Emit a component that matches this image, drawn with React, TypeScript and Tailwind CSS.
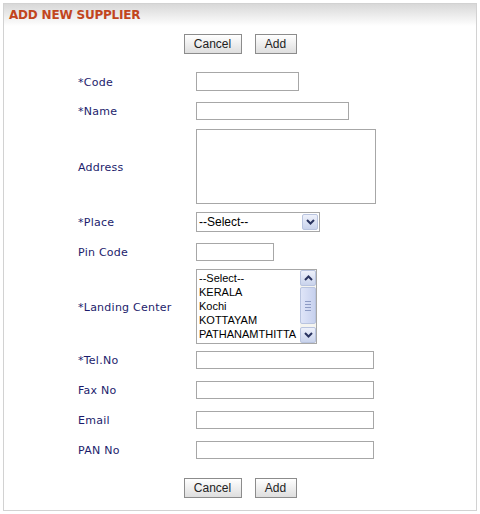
const labelCls =
	"w-[118px] shrink-0 pl-[74px] pt-[2px] box-content text-[11px] leading-[14px] tracking-[0.25px] text-[#1c1c6c] [font-family:'DejaVu_Sans',Verdana,sans-serif]";
const inputCls = "block h-full w-full border border-[#a7a7a7] bg-white";

function Buttons({ className = "" }: { className?: string }) {
	return (
		<div className={`flex justify-center gap-[13px] ${className}`}>
			<button className="h-[20px] w-[58px] border border-[#8c8c8c] bg-gradient-to-b from-white to-[#dedede] text-[12px] leading-[18px] text-[#222] [font-family:'Liberation_Sans',Arial,sans-serif]">
				Cancel
			</button>
			<button className="h-[20px] w-[42px] border border-[#8c8c8c] bg-gradient-to-b from-white to-[#dedede] text-[12px] leading-[18px] text-[#222] [font-family:'Liberation_Sans',Arial,sans-serif]">
				Add
			</button>
		</div>
	);
}

function Row({
	label,
	className,
	box,
	children,
}: {
	label: string;
	className: string;
	box: string;
	children?: React.ReactNode;
}) {
	return (
		<div className={`flex items-center ${className}`}>
			<span className={labelCls}>{label}</span>
			<div className={box}>{children ?? <div className={inputCls} />}</div>
		</div>
	);
}

function Chevron({ up = false }: { up?: boolean }) {
	return (
		<svg width="9" height="6" viewBox="0 0 9 6" className={up ? "rotate-180" : ""}>
			<path d="M1 1 L4.5 4.5 L8 1" fill="none" stroke="#2a3460" strokeWidth="2" />
		</svg>
	);
}

function ArrowBtn({ up = false }: { up?: boolean }) {
	return (
		<div className="flex h-[16px] w-[16px] items-center justify-center rounded-[2px] border border-[#b9c4df] bg-gradient-to-b from-[#eef1fb] to-[#c9d3ec]">
			<Chevron up={up} />
		</div>
	);
}

export default function App() {
	const places = ["--Select--", "KERALA", "Kochi", "KOTTAYAM", "PATHANAMTHITTA"];
	return (
		<div className="pl-[3px] pt-[3px]">
			<div className="h-[508px] w-[474px] border border-[#d2d2d2] bg-white">
				<div className="h-[22px] bg-gradient-to-b from-[#d8d8d8] to-white pl-[5px] pt-[4px]">
					<h1 className="text-[12px] font-bold leading-[14px] tracking-[-0.2px] text-[#c2451d] [font-family:'DejaVu_Sans',Verdana,sans-serif]">
						ADD NEW SUPPLIER
					</h1>
				</div>

				<Buttons className="mt-[8px]" />

				<Row label="*Code" className="mt-[18px]" box="h-[19px] w-[103px]" />
				<Row label="*Name" className="mt-[11px]" box="h-[18px] w-[153px]" />
				<Row label="Address" className="mt-[9px]" box="h-[75px] w-[180px]" />
				<Row label="*Place" className="mt-[8px]" box="h-[20px] w-[124px]">
					<div className="flex h-full w-full items-center border border-[#a7a7a7] bg-white pl-[2px] pr-[1px]">
						<span className="flex-1 text-[12px] leading-[14px] text-black [font-family:'Liberation_Sans',Arial,sans-serif]">
							--Select--
						</span>
						<div className="flex h-[16px] w-[16px] items-center justify-center rounded-[2px] border border-[#b9c4df] bg-gradient-to-b from-[#eef1fb] to-[#c9d3ec]">
							<Chevron />
						</div>
					</div>
				</Row>
				<Row label="Pin Code" className="mt-[11px]" box="h-[18px] w-[78px]" />
				<Row label="*Landing Center" className="mt-[8px]" box="h-[75px] w-[121px]">
					<div className="flex h-full w-full border border-[#a7a7a7] bg-white">
						<div className="flex-1 pl-[2px] pt-[1px] text-[11px] leading-[14px] text-black [font-family:'Liberation_Sans',Arial,sans-serif]">
							{places.map((p) => (
								<div key={p}>{p}</div>
							))}
						</div>
						<div className="flex w-[16px] flex-col bg-[#f4f4f0]">
							<ArrowBtn up />
							<div className="mt-[1px] flex h-[37px] w-[16px] flex-col items-center justify-center gap-[2px] rounded-[2px] border border-[#b9c4df] bg-gradient-to-r from-[#dfe5f8] to-[#c7d1ee]">
								<div className="h-px w-[6px] bg-[#8d9bc4]" />
								<div className="h-px w-[6px] bg-[#8d9bc4]" />
								<div className="h-px w-[6px] bg-[#8d9bc4]" />
								<div className="h-px w-[6px] bg-[#8d9bc4]" />
							</div>
							<div className="flex-1" />
							<ArrowBtn />
						</div>
					</div>
				</Row>
				<Row label="*Tel.No" className="mt-[7px]" box="h-[18px] w-[178px]" />
				<Row label="Fax No" className="mt-[12px]" box="h-[18px] w-[178px]" />
				<Row label="Email" className="mt-[12px]" box="h-[18px] w-[178px]" />
				<Row label="PAN No" className="mt-[12px]" box="h-[18px] w-[178px]" />

				<Buttons className="mt-[19px]" />
			</div>
		</div>
	);
}
